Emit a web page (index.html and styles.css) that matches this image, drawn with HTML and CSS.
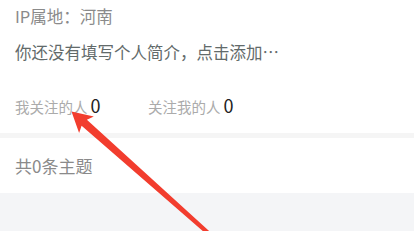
FILE: index.html
```html
<!DOCTYPE html>
<html lang="zh-CN">
<head>
<meta charset="utf-8">
<title>个人主页</title>
<link rel="stylesheet" href="styles.css">
</head>
<body>
<div class="page">
  <section class="profile">
    <p class="ip">IP属地：河南</p>
    <p class="bio">你还没有填写个人简介<span class="comma">，</span>点击添加…</p>
    <div class="follow">
      <div class="stat"><span class="label">我关注的人</span><span class="num">0</span></div>
      <div class="stat"><span class="label">关注我的人</span><span class="num">0</span></div>
    </div>
  </section>
  <div class="band"></div>
  <section class="topics"><span class="count">共0条主题</span></section>
  <div class="rest"></div>
  <svg class="arrow" width="414" height="231" viewBox="0 0 414 231" aria-hidden="true">
    <polygon points="71.5,111.5 79.1,133.0 81.6,125.8 212.2,239.2 214.8,236.2 86.9,119.8 93.8,116.6" fill="#f23d2e"/>
  </svg>
</div>
</body>
</html>
```

FILE: styles.css
```css
* { box-sizing: border-box; }
html, body { margin: 0; padding: 0; background: #ffffff; }
body { font-family: "Noto Sans CJK SC", "Noto Sans", sans-serif; }
.page {
  position: relative;
  width: 414px;
  height: 231px;
  overflow: hidden;
  display: flex;
  flex-direction: column;
}
.profile {
  padding: 0 15px 15px;
  background: #ffffff;
}
.ip {
  margin: 0;
  height: 32px;
  line-height: 32px;
  font-size: 16.5px;
  color: #8a8a8a;
}
.bio {
  margin: 4px 0 0;
  height: 32px;
  line-height: 32px;
  font-size: 16.5px;
  color: #626a6a;
  white-space: nowrap;
}
.comma { letter-spacing: -0.45em; margin-right: 0.45em; }
.follow {
  margin-top: 22px;
  height: 28px;
  display: grid;
  grid-template-columns: 133px 1fr;
  align-items: end;
}
.stat {
  display: flex;
  align-items: baseline;
  gap: 3px;
}
.label {
  font-size: 14.5px;
  color: #ababab;
}
.num {
  font-size: 18px;
  color: #222222;
}
.band {
  height: 5px;
  background: #f5f5f5;
}
.topics {
  height: 55px;
  line-height: 55px;
  padding-left: 15px;
  background: #ffffff;
}
.count {
  font-size: 17px;
  color: #8a8a8a;
}
.rest {
  flex: 1;
  background: #f4f5f7;
}
.arrow {
  position: absolute;
  left: 0;
  top: 0;
  pointer-events: none;
}
```
